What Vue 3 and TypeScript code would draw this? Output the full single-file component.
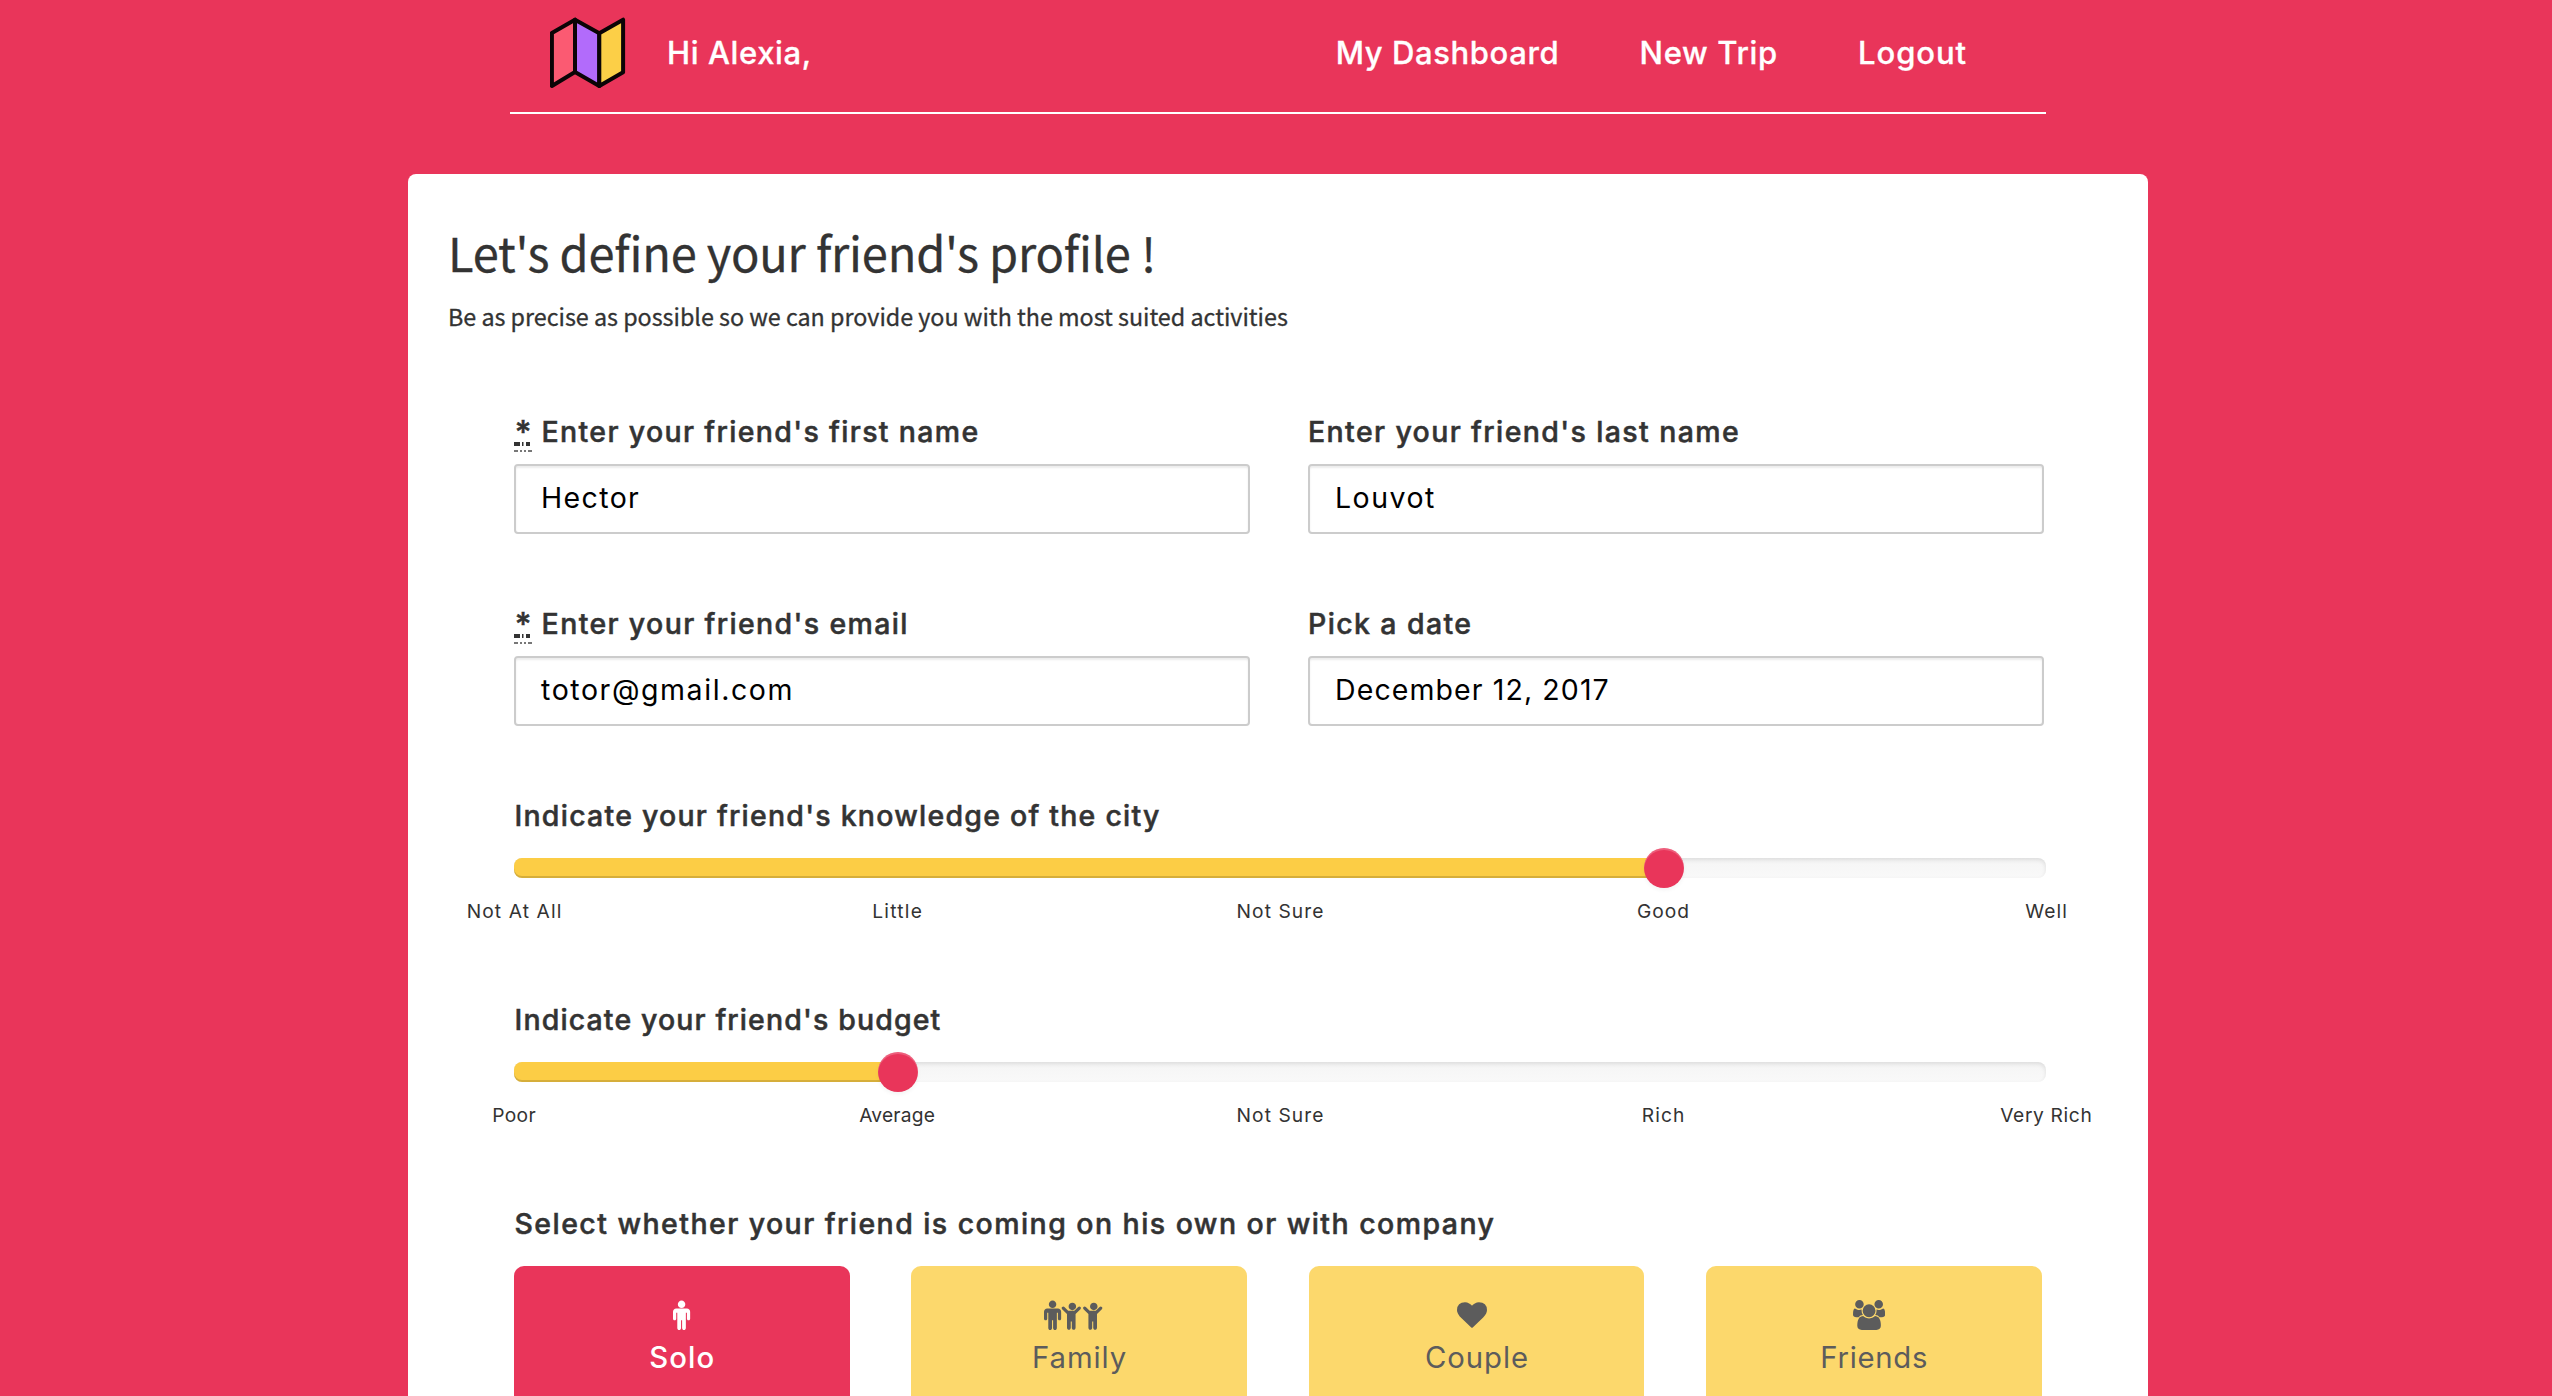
<script setup lang="ts">
interface Label { text: string; spacing: number }
interface Field extends Label { value: string; valueSpacing: number; required: boolean }
interface Slider extends Label { position: number; ticks: Label[] }
interface Shape { x: number; d: string }
interface Option extends Label { active: boolean; shift: number; iconWidth: number; shapes: Shape[] }

const links: Label[] = [
  { text: 'My Dashboard', spacing: 0.6 },
  { text: 'New Trip', spacing: 0.65 },
  { text: 'Logout', spacing: 0.9 },
]

const fields: Field[] = [
  { text: "Enter your friend's first name", spacing: 1.34, value: 'Hector', valueSpacing: 1.38, required: true },
  { text: "Enter your friend's last name", spacing: 1.38, value: 'Louvot', valueSpacing: 1.48, required: false },
  { text: "Enter your friend's email", spacing: 1.36, value: 'totor@gmail.com', valueSpacing: 1.58, required: true },
  { text: 'Pick a date', spacing: 1.38, value: 'December 12, 2017', valueSpacing: 1.1, required: false },
]

const sliders: Slider[] = [
  {
    text: "Indicate your friend's knowledge of the city", spacing: 1.23, position: 75,
    ticks: [
      { text: 'Not At All', spacing: 1.1 }, { text: 'Little', spacing: 1.25 }, { text: 'Not Sure', spacing: 1.06 },
      { text: 'Good', spacing: 0.95 }, { text: 'Well', spacing: 1.1 },
    ],
  },
  {
    text: "Indicate your friend's budget", spacing: 1.12, position: 25,
    ticks: [
      { text: 'Poor', spacing: 0.3 }, { text: 'Average', spacing: 0.2 }, { text: 'Not Sure', spacing: 1.06 },
      { text: 'Rich', spacing: 1.1 }, { text: 'Very Rich', spacing: 0.65 },
    ],
  },
]

const male = 'M1024 832v-416q0 -40 -28 -68t-68 -28t-68 28t-28 68v352h-64v-912q0 -46 -33 -79t-79 -33t-79 33t-33 79v464h-64v-464q0 -46 -33 -79t-79 -33t-79 33t-33 79v912h-64v-352q0 -40 -28 -68t-68 -28t-68 28t-28 68v416q0 80 56 136t136 56h640q80 0 136 -56t56 -136zM736 1280q0 -93 -65.5 -158.5t-158.5 -65.5t-158.5 65.5t-65.5 158.5t65.5 158.5t158.5 65.5t158.5 -65.5t65.5 -158.5z'
const child = 'M1124 988l-292 -292v-824q0 -46 -33 -79t-79 -33t-79 33t-33 79v384h-64v-384q0 -46 -33 -79t-79 -33t-79 33t-33 79v824l-292 292q-28 28 -28 68t28 68q29 28 68.5 28t67.5 -28l228 -228h368l228 228q28 28 68 28t68 -28q28 -29 28 -68.5t-28 -67.5zM864 1152q0 -93 -65.5 -158.5t-158.5 -65.5t-158.5 65.5t-65.5 158.5t65.5 158.5t158.5 65.5t158.5 -65.5t65.5 -158.5z'
const heart = 'M896 -128q-26 0 -44 18l-624 602q-10 8 -27.5 26t-55.5 65.5t-68 97.5t-53.5 121t-23.5 138q0 220 127 344t351 124q62 0 126.5 -21.5t120 -58t95.5 -68.5t76 -68q36 36 76 68t95.5 68.5t120 58t126.5 21.5q224 0 351 -124t127 -344q0 -221 -229 -450l-623 -600q-18 -18 -44 -18z'
const users = 'M593 640q-162 -5 -265 -128h-134q-82 0 -138 40.5t-56 118.5q0 353 124 353q6 0 43.5 -21t97.5 -42.5t119 -21.5q67 0 133 23q-5 -37 -5 -66q0 -139 81 -256zM1664 3q0 -120 -73 -189.5t-194 -69.5h-874q-121 0 -194 69.5t-73 189.5q0 53 3.5 103.5t14 109t26.5 108.5t43 97.5t62 81t85.5 53.5t111.5 20q10 0 43 -21.5t73 -48t107 -48t135 -21.5t135 21.5t107 48t73 48t43 21.5q61 0 111.5 -20t85.5 -53.5t62 -81t43 -97.5t26.5 -108.5t14 -109t3.5 -103.5zM640 1280q0 -106 -75 -181t-181 -75t-181 75t-75 181t75 181t181 75t181 -75t75 -181zM1344 896q0 -159 -112.5 -271.5t-271.5 -112.5t-271.5 112.5t-112.5 271.5t112.5 271.5t271.5 112.5t271.5 -112.5t112.5 -271.5zM1920 671q0 -78 -56 -118.5t-138 -40.5h-134q-103 123 -265 128q81 117 81 256q0 29 -5 66q66 -23 133 -23q59 0 119 21.5t97.5 42.5t43.5 21q124 0 124 -353zM1792 1280q0 -106 -75 -181t-181 -75t-181 75t-75 181t75 181t181 75t181 -75t75 -181z'

const options: Option[] = [
  { text: 'Solo', spacing: 1.1, active: true, shift: 0.3, iconWidth: 1024, shapes: [{ x: 0, d: male }] },
  {
    text: 'Family', spacing: 0.93, active: false, shift: -6, iconWidth: 3540,
    shapes: [{ x: 0, d: male }, { x: 1054, d: child }, { x: 2334, d: child }],
  },
  { text: 'Couple', spacing: 0.91, active: false, shift: -5, iconWidth: 1792, shapes: [{ x: 0, d: heart }] },
  { text: 'Friends', spacing: 0.73, active: false, shift: -5.3, iconWidth: 1920, shapes: [{ x: 0, d: users }] },
]

// Letter spacing without the trailing gap after the last glyph.
const tracking = (s: number) => ({ letterSpacing: `${s}px`, marginRight: `${-s}px` })
</script>

<template>
  <div class="page">
    <header class="navbar">
      <svg class="logo" width="76" height="72" viewBox="50 17 76 72" stroke="#0b0406" stroke-width="4" stroke-linejoin="round">
        <path d="M51.9 33 75 19.7V72L51.9 86Z" fill="#fb5a72" />
        <path d="M75 19.7 99.3 33.3V86L75 72Z" fill="#b26bfb" />
        <path d="M99.3 33.3 123.1 19.7V72.3L99.3 86Z" fill="#fccf47" />
      </svg>
      <span class="hello">Hi Alexia,</span>
      <nav>
        <a v-for="l in links" :key="l.text" :style="tracking(l.spacing)">{{ l.text }}</a>
      </nav>
    </header>

    <main class="card">
      <h1>Let's define your friend's profile !</h1>
      <p class="intro">Be as precise as possible so we can provide you with the most suited activities</p>

      <form class="form">
        <div class="fields">
          <div v-for="f in fields" :key="f.text" class="field">
            <label class="label">
              <abbr v-if="f.required">*<svg width="18" height="10" viewBox="0 0 18 10">
                <path d="M0 2H6M8 2H9.5M12 2H16" stroke="#333" stroke-width="4" />
                <path d="M0 9H4M6 9H8M10 9H12M14 9H18" stroke="#777" stroke-width="2" />
              </svg></abbr>
              <span :style="tracking(f.spacing)">{{ f.text }}</span>
            </label>
            <div class="input"><span :style="tracking(f.valueSpacing)">{{ f.value }}</span></div>
          </div>
        </div>

        <div v-for="s in sliders" :key="s.text" class="slider">
          <label class="label"><span :style="tracking(s.spacing)">{{ s.text }}</span></label>
          <div class="track">
            <div class="selection" :style="{ width: s.position + '%' }"></div>
            <div class="handle" :style="{ left: s.position + '%' }"></div>
          </div>
          <div class="ticks">
            <div v-for="t in s.ticks" :key="t.text" class="tick"><span :style="tracking(t.spacing)">{{ t.text }}</span></div>
          </div>
        </div>

        <div class="company">
          <label class="label"><span class="company-label">Select whether your friend is coming on his own or with company</span></label>
          <div class="options">
            <div v-for="o in options" :key="o.text" class="option" :class="{ active: o.active }">
              <svg height="30" :width="o.iconWidth * 30 / 1792" :viewBox="`0 -1536 ${o.iconWidth} 1792`" fill="currentColor" :style="{ marginLeft: o.shift * 2 + 'px' }">
                <path v-for="(p, i) in o.shapes" :key="i" :d="p.d" :transform="`translate(${p.x} 0) scale(1 -1)`" />
              </svg>
              <span class="option-text"><span :style="tracking(o.spacing)">{{ o.text }}</span></span>
            </div>
          </div>
        </div>
      </form>
    </main>
  </div>
</template>

<style>
body { margin: 0; background: #e9355a; overflow: hidden; }
</style>

<style scoped>
.page {
  box-sizing: border-box;
  height: 1396px;
  overflow: hidden;
  background: #e9355a;
  color: #333;
  font-family: Inter, "Liberation Sans", sans-serif;
}
.navbar {
  box-sizing: border-box;
  display: flex;
  align-items: center;
  width: 1536px;
  height: 114px;
  margin-left: 510px;
  padding: 0 80px 6px 40px;
  border-bottom: 2px solid #fff;
  color: #fff;
  font-size: 31px;
  font-weight: 500;
  -webkit-text-stroke: 0.3px currentColor;
}
.logo { display: block; }
.hello { margin: 0 0 2px 41px; letter-spacing: 0.62px; }
nav { display: flex; gap: 81px; margin: 0 0 2px auto; }
.card {
  box-sizing: border-box;
  width: 1740px;
  height: 1300px;
  margin: 60px 0 0 408px;
  padding: 48px 40px 0;
  border-radius: 8px;
  background: #fff;
}
h1, .intro {
  margin: 0;
  font-family: "Noto Sans CJK SC", sans-serif;
  font-weight: 400;
  white-space: nowrap;
  -webkit-text-stroke: 0.3px #333;
}
h1 { font-size: 47px; line-height: 60px; letter-spacing: -0.19px; }
.intro { margin-top: 19px; font-size: 23.3px; line-height: 30px; letter-spacing: -0.01px; }
.form { width: 1532px; margin: 81px 0 0 66px; }
.fields { display: grid; grid-template-columns: 736px 736px; gap: 70px 58px; }
.label {
  display: flex;
  height: 40px;
  font-size: 28.5px;
  font-weight: 500;
  line-height: 40px;
  white-space: nowrap;
  -webkit-text-stroke: 0.5px currentColor;
}
.label abbr { position: relative; width: 18px; margin-right: 9.6px; font-size: 32px; line-height: 42px; text-align: center; }
.label abbr svg { position: absolute; left: 0; top: 30px; }
.input {
  box-sizing: border-box;
  display: flex;
  align-items: center;
  height: 70px;
  margin-top: 12px;
  padding: 0 25px 3px;
  border: 2px solid #ccc;
  border-radius: 4px;
  box-shadow: inset 0 2px 2px rgba(0, 0, 0, 0.075);
  color: #000;
  font-size: 28.5px;
}
.slider { margin-top: 70px; }
.slider + .slider, .company { margin-top: 77px; }
.track {
  position: relative;
  height: 20px;
  margin-top: 22px;
  border-radius: 8px;
  background: linear-gradient(#f5f5f5, #f9f9f9);
  box-shadow: inset 0 2px 4px rgba(0, 0, 0, 0.1);
}
.selection {
  height: 20px;
  border-radius: 8px;
  background: #fccd45;
  box-shadow: inset 0 -2px 0 rgba(0, 0, 0, 0.15);
}
.handle {
  position: absolute;
  top: -10px;
  width: 40px;
  height: 40px;
  margin-left: -19px;
  border-radius: 50%;
  background: #e9355a;
  box-shadow: inset 0 2px 0 rgba(255, 255, 255, 0.2), 0 2px 4px rgba(0, 0, 0, 0.05);
}
.ticks { display: flex; justify-content: space-between; margin-top: 21px; font-size: 19.2px; line-height: 24px; }
.tick { display: flex; justify-content: center; width: 0; white-space: nowrap; }
.slider .label, .company .label { padding-left: 0.5px; }
.company-label { letter-spacing: 1.44px; }
.options { display: grid; grid-template-columns: repeat(4, 335.5px); gap: 61.9px; margin-top: 22px; }
.option {
  box-sizing: border-box;
  display: flex;
  flex-direction: column;
  align-items: center;
  height: 180px;
  padding-top: 34px;
  border-radius: 10px;
  background: #fcd86c;
  color: #5c5c5c;
}
.option.active { background: #e9355a; color: #fff; font-weight: 500; }
.option svg { display: block; }
.option-text { display: flex; margin-top: 7.5px; font-size: 29.3px; line-height: 40px; }
</style>
